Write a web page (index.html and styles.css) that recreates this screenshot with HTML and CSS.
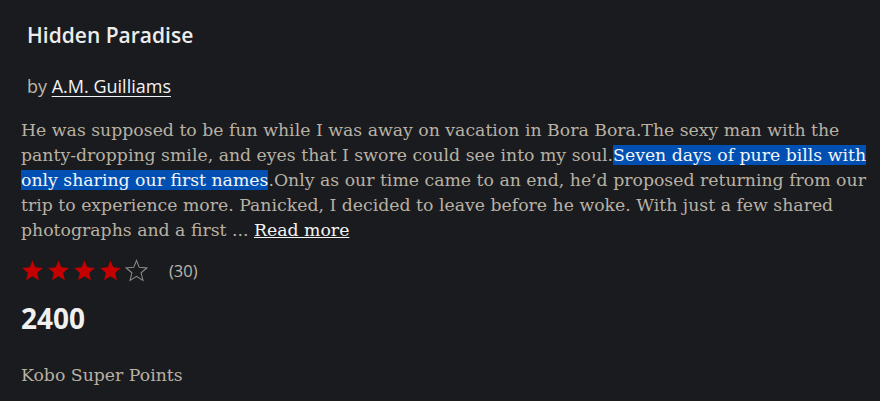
FILE: index.html
```html
<!DOCTYPE html>
<html>
<head>
<meta charset="utf-8">
<link rel="stylesheet" href="styles.css">
</head>
<body>
<div class="card">
  <h2 class="title">Hidden Paradise</h2>
  <p class="author">by <a href="#">A.M. Guilliams</a></p>
  <p class="synopsis">He was supposed to be fun while I was away on vacation in Bora Bora.The sexy man with the panty-dropping smile, and eyes that I swore could see into my soul.<span class="sel">Seven days of pure bills with only sharing our first names</span>.Only as our time came to an end, he’d proposed returning from our trip to experience more. Panicked, I decided to leave before he woke. With just a few shared photographs and a first ... <a href="#" class="more">Read more</a></p>
  <div class="rating">
    <div class="stars">
      <svg viewBox="0 0 24 24" class="star full"><polygon points="12,1.5 14.9,8.7 22.8,9.3 16.8,14.4 18.7,22.3 12,18.1 5.3,22.3 7.2,14.4 1.2,9.3 9.1,8.7"/></svg>
      <svg viewBox="0 0 24 24" class="star full"><polygon points="12,1.5 14.9,8.7 22.8,9.3 16.8,14.4 18.7,22.3 12,18.1 5.3,22.3 7.2,14.4 1.2,9.3 9.1,8.7"/></svg>
      <svg viewBox="0 0 24 24" class="star full"><polygon points="12,1.5 14.9,8.7 22.8,9.3 16.8,14.4 18.7,22.3 12,18.1 5.3,22.3 7.2,14.4 1.2,9.3 9.1,8.7"/></svg>
      <svg viewBox="0 0 24 24" class="star full"><polygon points="12,1.5 14.9,8.7 22.8,9.3 16.8,14.4 18.7,22.3 12,18.1 5.3,22.3 7.2,14.4 1.2,9.3 9.1,8.7"/></svg>
      <svg viewBox="0 0 24 24" class="star empty"><polygon points="12,1.5 14.9,8.7 22.8,9.3 16.8,14.4 18.7,22.3 12,18.1 5.3,22.3 7.2,14.4 1.2,9.3 9.1,8.7"/></svg>
    </div>
    <span class="count">(30)</span>
  </div>
  <div class="points">2400</div>
  <div class="label">Kobo Super Points</div>
</div>
</body>
</html>
```
FILE: styles.css
```css
html, body {
  margin: 0;
  background: #1a1b1e;
}
.card {
  padding: 21px 0 0 21px;
  width: 849px;
}
.title {
  margin: 0 0 0 6px;
  font-family: "Open Sans", sans-serif;
  font-weight: 600;
  font-size: 21px;
  line-height: 28px;
  color: #ececec;
}
.author {
  margin: 24px 0 0 6px;
  font-family: "Open Sans", sans-serif;
  font-size: 18px;
  line-height: 26px;
  color: #bdb7ac;
}
.author a {
  color: #f2f2f2;
  text-decoration: underline;
  text-underline-offset: 3px;
}
.synopsis {
  margin: 19px 0 0 0;
  font-family: "DejaVu Serif", serif;
  font-size: 17.3px;
  line-height: 25px;
  color: #b8b1a4;
}
.sel {
  background: #0050b4;
  color: #f4f4f4;
}
.more {
  color: #f4f4f4;
  text-decoration: underline;
}
.rating {
  display: flex;
  align-items: center;
  margin-top: 16px;
}
.stars {
  display: flex;
  gap: 3px;
}
.star {
  width: 23px;
  height: 23px;
}
.star.full {
  fill: #c40000;
}
.star.empty {
  fill: none;
  stroke: #8a8a8a;
  stroke-width: 1.1;
}
.count {
  margin-left: 21px;
  font-family: "Open Sans", sans-serif;
  font-size: 16.5px;
  color: #bdb7ac;
}
.points {
  margin-top: 18px;
  font-family: "Open Sans", sans-serif;
  font-weight: 700;
  font-size: 28px;
  line-height: 36px;
  color: #f0f0f0;
}
.label {
  margin-top: 27px;
  font-family: "DejaVu Serif", serif;
  font-size: 17.3px;
  line-height: 25px;
  color: #b8b1a4;
}
```
